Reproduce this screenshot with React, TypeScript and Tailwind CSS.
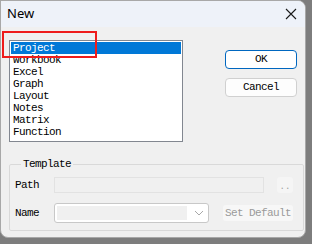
import React from "react";

const mono = { fontFamily: '"Liberation Mono", "DejaVu Sans Mono", monospace' };

export default function App() {
  const items = ["Project", "Workbook", "Excel", "Graph", "Layout", "Notes", "Matrix", "Function"];
  return (
    <div className="relative w-[312px] h-[244px] bg-[#7d7d7d] overflow-hidden">
      <div className="w-[306px] h-[238px] bg-[#f0f0f0] border border-[#a8a8a8] rounded-tr-[8px] rounded-bl-[8px] rounded-br-[8px] overflow-hidden flex flex-col">
        {/* title bar */}
        <div className="h-[26px] bg-[#eef2f9] flex items-center justify-between pl-[6px] pr-[6px] shrink-0">
          <span className="text-[13px] text-black" style={{ fontFamily: '"Noto Sans", "Open Sans", sans-serif' }}>New</span>
          <svg width="12" height="12" viewBox="0 0 12 12" className="mr-[2px]">
            <path d="M1 1 L11 11 M11 1 L1 11" stroke="#1a1a1a" strokeWidth="1.1" fill="none" />
          </svg>
        </div>
        {/* body */}
        <div className="flex flex-col pl-[8px] pt-[13px]" style={mono}>
          <div className="flex">
            <div className="w-[174px] h-[102px] bg-white border border-[#828790] p-[1px] text-[11px] leading-[12px] tracking-[-0.6px] text-black">
              {items.map((it, i) => (
                <div
                  key={it}
                  className={
                    i === 0
                      ? "h-[12px] pl-[2px] bg-[#0078d7] text-white"
                      : "h-[12px] pl-[2px]"
                  }
                >
                  {it}
                </div>
              ))}
            </div>
            <div className="ml-[42px] mt-[10px] flex flex-col gap-[9px]">
              <div className="w-[72px] h-[19px] bg-white border border-[#0067c0] rounded-[4px] flex items-center justify-center text-[11px] tracking-[-0.6px] text-black">
                OK
              </div>
              <div className="w-[72px] h-[19px] bg-[#fdfdfd] border border-[#d0d0d0] rounded-[4px] flex items-center justify-center text-[11px] tracking-[-0.6px] text-black">
                Cancel
              </div>
            </div>
          </div>
          <fieldset className="mt-[16px] w-[295px] h-[73px] border border-[#d9d9d9] rounded-[2px] px-[5px] pb-0">
            <legend className="ml-[6px] px-[2px] text-[11px] tracking-[-0.6px] leading-[12px] text-black">Template</legend>
            <div className="flex items-center mt-[7px] h-[16px]">
              <span className="w-[39px] text-[11px] tracking-[-0.6px] text-black">Path</span>
              <div className="w-[210px] h-[16px] bg-[#f0f0f0] border border-[#e2e2e2]" />
              <div className="ml-[13px] w-[16px] h-[16px] bg-[#f5f5f5] rounded-[3px] flex items-end justify-center text-[9px] leading-[12px] text-[#a0a0a0]">..</div>
            </div>
            <div className="flex items-center mt-[10px] h-[20px]">
              <span className="w-[39px] text-[11px] tracking-[-0.6px] text-black">Name</span>
              <div className="w-[155px] h-[20px] bg-white border border-[#c8c8c8] rounded-[3px] flex items-center p-[2px]">
                <div className="w-[130px] h-[14px] bg-[#f0f0f0]" />
                <svg width="10" height="6" viewBox="0 0 10 6" className="ml-[7px]">
                  <path d="M1 1 L5 5 L9 1" stroke="#a8a8a8" strokeWidth="1" fill="none" />
                </svg>
              </div>
              <div className="ml-[14px] w-[70px] h-[16px] bg-[#f7f7f7] rounded-[3px] flex items-center justify-center text-[11px] tracking-[-0.6px] text-[#9a9a9a]">
                Set Default
              </div>
            </div>
          </fieldset>
        </div>
      </div>
      {/* annotation overlay */}
      <div className="absolute left-[2px] top-[31px] w-[95px] h-[27px] border-2 border-[#ee1c1c]" />
    </div>
  );
}
